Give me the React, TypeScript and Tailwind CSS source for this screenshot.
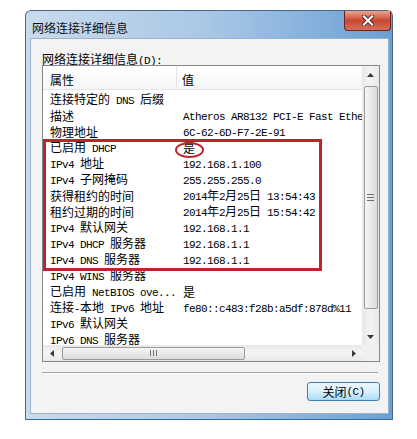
import React from "react";

const rows: [string, string][] = [
  ["连接特定的 DNS 后缀", ""],
  ["描述", "Atheros AR8132 PCI-E Fast Ethernet Controller (NDIS 6.20)"],
  ["物理地址", "6C-62-6D-F7-2E-91"],
  ["已启用 DHCP", "是"],
  ["IPv4 地址", "192.168.1.100"],
  ["IPv4 子网掩码", "255.255.255.0"],
  ["获得租约的时间", "2014年2月25日 13:54:43"],
  ["租约过期的时间", "2014年2月25日 15:54:42"],
  ["IPv4 默认网关", "192.168.1.1"],
  ["IPv4 DHCP 服务器", "192.168.1.1"],
  ["IPv4 DNS 服务器", "192.168.1.1"],
  ["IPv4 WINS 服务器", ""],
  ["已启用 NetBIOS ove...", "是"],
  ["连接-本地 IPv6 地址", "fe80::c483:f28b:a5df:878d%11"],
  ["IPv6 默认网关", ""],
  ["IPv6 DNS 服务器", ""],
];

// split into CJK / latin runs, latin gets the narrow mono look
const Txt = ({ t }: { t: string }) => {
  const parts = t.split(/([\u3000-\u9fff\uff00-\uffef]+)/);
  return (
    <>
      {parts.map((p, i) =>
        !p ? null : i % 2 ? (
          <span key={i} className="font-['Noto_Sans_CJK_SC',sans-serif] text-[12px]">
            {p}
          </span>
        ) : (
          <span key={i} className="font-['Liberation_Mono',monospace] text-[11px] tracking-[-0.6px]">
            {p}
          </span>
        )
      )}
    </>
  );
};

const Arrow = ({ dir }: { dir: "up" | "down" | "left" | "right" }) => {
  const pts = {
    up: "0,4 3.5,0 7,4",
    down: "0,0 3.5,4 7,0",
    left: "4,0 0,3.5 4,7",
    right: "0,0 4,3.5 0,7",
  }[dir];
  const v = dir === "up" || dir === "down";
  return (
    <svg width={v ? 7 : 4} height={v ? 4 : 7} viewBox={v ? "0 0 7 4" : "0 0 4 7"}>
      <polygon points={pts} fill="#3a3a3a" />
    </svg>
  );
};

const App = () => {
  return (
    <div className="relative w-[417px] h-[439px] bg-white pt-[10px] pl-[25px] text-black">
      {/* window */}
      <div className="w-[368px] h-[410px] flex flex-col border border-[#4a6886] border-b-[#2f6aa3] rounded-t-[6px] bg-linear-to-r from-[#c9dbee] via-[#a9c7e6] to-[#6a9fd3]">
        <div className="h-[27px] flex justify-between items-start">
          <div className="pl-[6px] pt-[10px] leading-[12px] text-[#111]">
            <Txt t="网络连接详细信息" />
          </div>
          <div className="w-[47px] h-[20px] mr-[1px] flex items-center justify-center rounded-b-[4px] border border-t-0 border-[#6b2418] bg-linear-to-b from-[#e9a593] via-[#c9462e] to-[#d3705a]">
            <svg width="12" height="11" viewBox="0 0 12 11">
              <path d="M2 1.5 L10 9.5 M10 1.5 L2 9.5" stroke="#5a2016" strokeWidth="4" strokeLinecap="square" />
              <path d="M2 1.5 L10 9.5 M10 1.5 L2 9.5" stroke="#ffffff" strokeWidth="2.2" strokeLinecap="square" />
            </svg>
          </div>
        </div>

        {/* client area */}
        <div className="flex-1 ml-[4px] mr-[3px] mb-[5px] flex flex-col bg-[#f3f3f3] border border-[#9fb3c8]">
          <div className="pl-[11px] pt-[13px] h-[26px] leading-[12px]">
            <Txt t="网络连接详细信息(D):" />
          </div>

          <div className="ml-[11px] w-[338px] h-[297px] border border-[#828790] bg-white flex flex-col">
            <div className="flex h-[279px]">
              <div className="w-[319px] overflow-hidden">
                <div className="h-[24px] flex border-b border-[#e2e4e8] bg-linear-to-b from-white to-[#f6f7f9]">
                  <div className="w-[134px] pl-[7px] pt-[7px] leading-[12px] border-r border-[#e2e4e8]">
                    <Txt t="属性" />
                  </div>
                  <div className="pl-[5px] pt-[7px] leading-[12px]">
                    <Txt t="值" />
                  </div>
                </div>
                <div className="pt-px">
                  {rows.map(([k, v], i) => (
                    <div key={i} className="h-[16px] flex items-center leading-[16px] whitespace-nowrap">
                      <div className="w-[135px] shrink-0 pl-[7px]">
                        <Txt t={k} />
                      </div>
                      <div className="pl-[5px]">
                        <Txt t={v} />
                      </div>
                    </div>
                  ))}
                </div>
              </div>

              {/* vertical scrollbar */}
              <div className="w-[17px] flex flex-col items-center bg-linear-to-r from-[#e8e8e8] via-[#f4f4f4] to-[#e8e8e8]">
                <div className="h-[17px] flex items-center justify-center">
                  <Arrow dir="up" />
                </div>
                <div className="mt-[3px] w-[14px] h-[223px] rounded-[2px] border border-[#9a9a9a] bg-linear-to-r from-[#f6f6f6] to-[#dcdcdc] flex flex-col items-center justify-center gap-[2px]">
                  <div className="w-[7px] h-px bg-[#6f6f6f]" />
                  <div className="w-[7px] h-px bg-[#6f6f6f]" />
                  <div className="w-[7px] h-px bg-[#6f6f6f]" />
                </div>
                <div className="flex-1" />
                <div className="h-[17px] flex items-center justify-center">
                  <Arrow dir="down" />
                </div>
              </div>
            </div>

            {/* horizontal scrollbar */}
            <div className="flex h-[16px]">
              <div className="w-[319px] flex items-center bg-linear-to-b from-[#e8e8e8] via-[#f4f4f4] to-[#e8e8e8]">
                <div className="w-[17px] flex items-center justify-center">
                  <Arrow dir="left" />
                </div>
                <div className="ml-[2px] w-[183px] h-[13px] rounded-[2px] border border-[#9a9a9a] bg-linear-to-b from-[#f6f6f6] to-[#dcdcdc] flex items-center justify-center gap-[2px]">
                  <div className="w-px h-[6px] bg-[#6f6f6f]" />
                  <div className="w-px h-[6px] bg-[#6f6f6f]" />
                  <div className="w-px h-[6px] bg-[#6f6f6f]" />
                </div>
                <div className="flex-1" />
                <div className="w-[17px] flex items-center justify-center">
                  <Arrow dir="right" />
                </div>
              </div>
              <div className="w-[17px] bg-[#f0f0f0]" />
            </div>
          </div>

          <div className="mt-[10px] ml-[11px] mr-[10px] border-t border-[#a0a0a0] border-b border-b-white" />

          <div className="mt-[8px] mr-[8px] self-end w-[73px] h-[19px] rounded-[3px] border border-[#3c7fb1] bg-linear-to-b from-[#eaf6fd] via-[#d9f0fc] to-[#a7d9f5] flex items-center justify-center leading-[12px]">
            <Txt t="关闭(C)" />
          </div>
        </div>
      </div>

      {/* red annotation */}
      <div className="absolute left-[43px] top-[139px] w-[279px] h-[132px] border-[3px] border-[#c1232b]" />
      <div className="absolute left-[175px] top-[142px] w-[29px] h-[16px] rounded-[50%] border-[2.5px] border-[#c1232b]" />
    </div>
  );
};

export default App;
